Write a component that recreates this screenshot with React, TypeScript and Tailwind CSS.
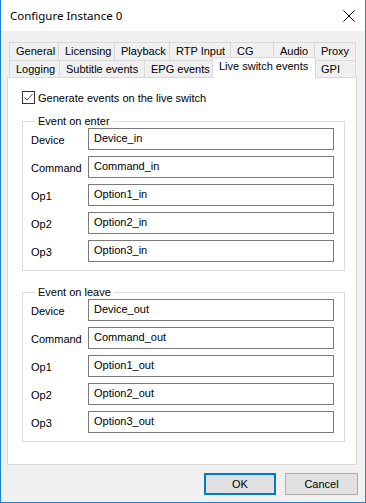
import React from "react";

const Tab = ({ label, w, last }: { label: string; w: string; last?: boolean }) => (
  <div
    className={`${w} shrink-0 h-full flex items-center pl-[6px] border-t border-l ${last ? "border-r" : ""} border-[#d9d9d9] bg-[#f0f0f0] whitespace-nowrap`}
  >
    {label}
  </div>
);

const Row = ({ label, value }: { label: string; value: string }) => (
  <div className="flex items-center h-[22px]">
    <div className="w-[57px] shrink-0 pt-[2px] leading-[14px] whitespace-nowrap">{label}</div>
    <div className="flex-1 h-[22px] border border-[#7a7a7a] bg-white pl-[5px] pt-[2px] leading-[14px] whitespace-nowrap">
      {value}
    </div>
  </div>
);

const Group = ({ title, rows, className }: { title: string; rows: [string, string][]; className?: string }) => (
  <fieldset className={`w-[323px] border border-[#dcdcdc] pl-[8px] pr-[10px] pb-[8px] ${className ?? ""}`}>
    <legend className="ml-[4px] px-[3px] leading-[14px]">{title}</legend>
    <div className="flex flex-col gap-[6px]">
      {rows.map(([l, v]) => (
        <Row key={l} label={l} value={v} />
      ))}
    </div>
  </fieldset>
);

export default function App() {
  return (
    <div className="w-[366px] h-[503px] flex flex-col bg-[#f0f0f0] border-x border-b border-[#1883d7] font-['Liberation_Sans',Arial,sans-serif] text-[11px] text-black">
      <div className="h-[31px] shrink-0 bg-white flex items-center justify-between pl-[9px] pr-[10px]">
        <span className="leading-[16px] text-[11.5px] font-['Noto_Sans',sans-serif]">Configure Instance 0</span>
        <svg width="12" height="12" viewBox="0 0 12 12">
          <path d="M0.5 0.5L11.5 11.5M11.5 0.5L0.5 11.5" stroke="#000" strokeWidth="1" fill="none" />
        </svg>
      </div>
      <div className="flex flex-col pt-[11px]">
        <div className="pl-[6px]">
          <div className="w-[350px]">
            <div className="flex h-[18px] pl-[2px]">
              <Tab label="General" w="w-[49px]" />
              <Tab label="Licensing" w="w-[56px]" />
              <Tab label="Playback" w="w-[55px]" />
              <Tab label="RTP Input" w="w-[61px]" />
              <Tab label="CG" w="w-[43px]" />
              <Tab label="Audio" w="w-[41px]" />
              <Tab label="Proxy" w="w-[42px]" last />
            </div>
            <div className="flex h-[17px] pl-[2px]">
              <Tab label="Logging" w="w-[50px]" />
              <Tab label="Subtitle events" w="w-[85px]" />
              <Tab label="EPG events" w="w-[70px]" />
              <div className="relative z-10 w-[104px] h-[21px] -mt-[3px] -mx-[2px] flex items-center pl-[6px] pb-[3px] border-t border-x border-[#d9d9d9] bg-white whitespace-nowrap shrink-0">
                Live switch events
              </div>
              <Tab label="GPI" w="w-[42px]" last />
            </div>
            <div className="w-[350px] h-[388px] bg-white border border-[#d9d9d9] pt-[13px] pl-[14px]">
              <div className="flex items-center h-[13px]">
                <svg width="13" height="13" viewBox="0 0 13 13" className="shrink-0">
                  <rect x="0.5" y="0.5" width="12" height="12" fill="#fff" stroke="#333" />
                  <path d="M2.5 6.5L5 9L10.5 3" stroke="#444" strokeWidth="1" fill="none" />
                </svg>
                <span className="ml-[3px] leading-[14px] whitespace-nowrap">Generate events on the live switch</span>
              </div>
              <Group
                className="mt-[10px]"
                title="Event on enter"
                rows={[
                  ["Device", "Device_in"],
                  ["Command", "Command_in"],
                  ["Op1", "Option1_in"],
                  ["Op2", "Option2_in"],
                  ["Op3", "Option3_in"],
                ]}
              />
              <Group
                className="mt-[14px]"
                title="Event on leave"
                rows={[
                  ["Device", "Device_out"],
                  ["Command", "Command_out"],
                  ["Op1", "Option1_out"],
                  ["Op2", "Option2_out"],
                  ["Op3", "Option3_out"],
                ]}
              />
            </div>
          </div>
        </div>
        <div className="flex justify-end gap-[9px] pr-[7px] mt-[8px]">
          <div className="w-[72px] h-[22px] border-2 border-[#0078d7] bg-[#e1e1e1] flex items-center justify-center leading-[14px]">
            OK
          </div>
          <div className="w-[73px] h-[22px] border border-[#adadad] bg-[#e1e1e1] flex items-center justify-center leading-[14px]">
            Cancel
          </div>
        </div>
      </div>
    </div>
  );
}
